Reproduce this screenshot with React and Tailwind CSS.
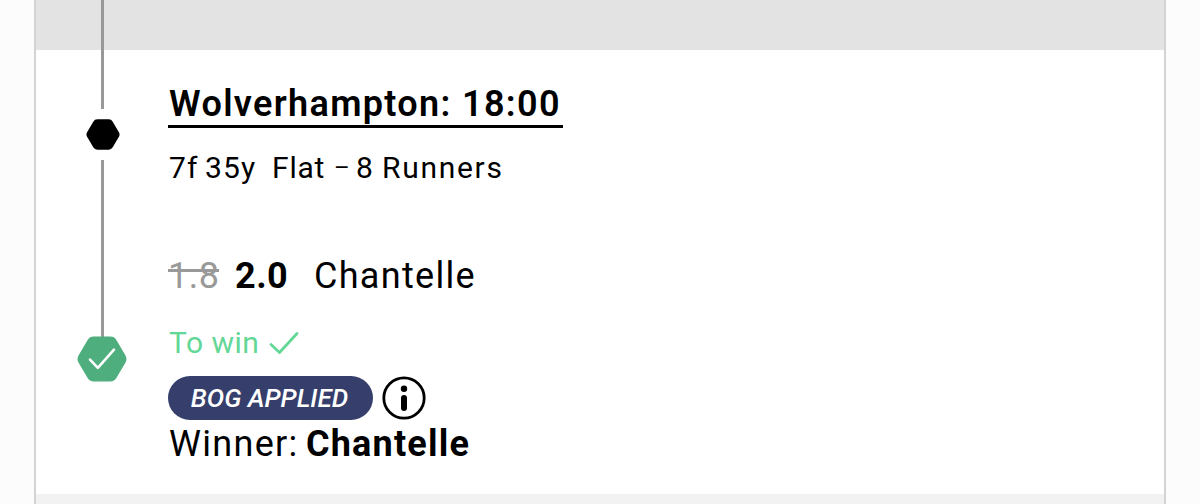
const Hexagon = ({ className, children }) => (
    <svg viewBox="0 0 48 44" className={className}>
        <path
            d="M16 2 H32 Q35 2 36.5 4.6 L45.3 19.5 Q46.7 22 45.3 24.5 L36.5 39.4 Q35 42 32 42 H16 Q13 42 11.5 39.4 L2.7 24.5 Q1.3 22 2.7 19.5 L11.5 4.6 Q13 2 16 2 Z"
            fill="currentColor"
            stroke="currentColor"
            strokeWidth="3"
            strokeLinejoin="round"
        />
        {children}
    </svg>
)

const Check = ({ className }) => (
    <svg viewBox="0 0 30 24" className={className} fill="none" stroke="currentColor" strokeWidth="2.8" strokeLinecap="round" strokeLinejoin="round">
        <path d="M2 13.5 L10.5 21.5 L28 2.5" />
    </svg>
)

const InfoIcon = () => (
    <svg viewBox="0 0 44 44" className="ml-[9px] h-[44px] w-[44px] text-black">
        <circle cx="22" cy="22" r="20.2" fill="none" stroke="currentColor" strokeWidth="2.8" />
        <circle cx="22" cy="12.8" r="3.2" fill="currentColor" />
        <rect x="19" y="19" width="6" height="16" rx="3" fill="currentColor" />
    </svg>
)

const Timeline = () => (
    <div className="flex w-[132px] shrink-0 flex-col items-center">
        <div className="h-[59px] w-[3px] bg-[#999999]" />
        <Hexagon className="mt-[10px] ml-px h-[31px] w-[34px] text-black" />
        <div className="mt-[10px] h-[177px] w-[3px] bg-[#999999]" />
        <Hexagon className="-mt-px h-[46px] w-[50px] text-[#4fae7e]">
            <path d="M12.5 22.5 L20 30.5 L35.5 13" fill="none" stroke="white" strokeWidth="2.5" strokeLinecap="round" strokeLinejoin="round" />
        </Hexagon>
    </div>
)

export default function App() {
    return (
        <div className="flex h-[504px] w-[1200px] overflow-hidden bg-[#fcfcfc] pl-[34px] font-['Roboto',sans-serif] whitespace-nowrap text-black">
            <div className="flex w-[1132px] flex-col border-x-2 border-[#d3d3d3] bg-white">
                <div className="h-[50px] bg-[#e3e3e3]">
                    <div className="flex w-[132px] justify-center">
                        <div className="h-[50px] w-[3px] bg-[#999999]" />
                    </div>
                </div>
                <div className="flex h-[444px]">
                    <Timeline />
                    <div className="flex flex-col items-start">
                        <h1 className="mt-[34px] w-[395px] border-b-3 border-black pb-px pl-px text-[36px] leading-[40px] font-semibold tracking-[1.35px]">
                            Wolverhampton: 18:00
                        </h1>
                        <p className="mt-[20px] flex pl-px text-[30px] leading-[40px] tracking-[1.2px]">
                            <span className="w-[36px]">7f</span>
                            <span className="w-[67px]">35y</span>
                            <span className="w-[62px] tracking-[0.8px]">Flat</span>
                            <span className="w-[22px] text-[24px]">–</span>
                            <span className="w-[26px]">8</span>
                            <span className="tracking-[1.7px]">Runners</span>
                        </p>
                        <p className="mt-[68px] flex text-[36px] leading-[40px]">
                            <span className="relative mr-[16px] w-[51px] tracking-[0.5px] text-[#999999]">
                                1.8
                                <span className="absolute top-[13px] left-0 h-[3px] w-full bg-[#999999]" />
                            </span>
                            <span className="w-[79px] font-bold tracking-[0.5px]">2.0</span>
                            <span className="tracking-[1.3px]">Chantelle</span>
                        </p>
                        <p className="mt-[27px] flex items-center pl-px text-[30px] leading-[40px] tracking-[0.5px] text-[#63d796]">
                            <span className="w-[100px]">To win</span>
                            <Check className="h-[24px] w-[30px]" />
                        </p>
                        <div className="mt-[13px] flex items-center">
                            <span className="flex h-[44px] w-[205px] items-center justify-center rounded-full bg-[#363f6b] pr-[2px] text-[26px] font-medium text-white italic">
                                BOG APPLIED
                            </span>
                            <InfoIcon />
                        </div>
                        <p className="mt-[4px] flex pl-px text-[36px] leading-[40px]">
                            <span className="w-[137px] tracking-[1.3px]">Winner:</span>
                            <span className="font-bold tracking-[1.2px]">Chantelle</span>
                        </p>
                    </div>
                </div>
                <div className="h-[10px] bg-[#f2f2f2]" />
            </div>
        </div>
    )
}
